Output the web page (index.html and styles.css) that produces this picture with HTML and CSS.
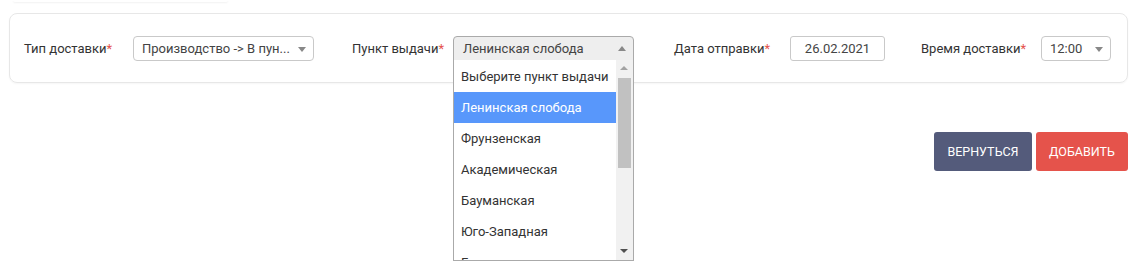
FILE: index.html
```html
<!DOCTYPE html>
<html lang="ru">
<head>
    <meta charset="UTF-8">
    <title>Доставка</title>
    <link rel="stylesheet" href="styles.css">
</head>
<body>
    <div class="page">
        <!-- Tab above the card, mostly scrolled out -->
        <div class="tab-edge"></div>

        <div class="card">
            <div class="field field-type">
                <label class="label">Тип доставки<span class="req">*</span></label>
                <div class="select">
                    <span class="select-text">Производство -&gt; В пун...</span>
                    <span class="arrow"></span>
                </div>
            </div>

            <div class="field field-point">
                <label class="label">Пункт выдачи<span class="req">*</span></label>
                <div class="select-wrap">
                    <div class="select open">
                        <span class="select-text">Ленинская слобода</span>
                        <span class="arrow up"></span>
                    </div>

                    <!-- Open dropdown -->
                    <div class="dropdown">
                        <ul class="options">
                            <li>Выберите пункт выдачи</li>
                            <li class="active">Ленинская слобода</li>
                            <li>Фрунзенская</li>
                            <li>Академическая</li>
                            <li>Бауманская</li>
                            <li>Юго-Западная</li>
                            <li>Гагаринская</li>
                        </ul>
                        <div class="scrollbar">
                            <span class="sb-btn sb-up"></span>
                            <div class="sb-track">
                                <div class="sb-thumb"></div>
                            </div>
                            <span class="sb-btn sb-down"></span>
                        </div>
                    </div>
                </div>
            </div>

            <div class="field field-date">
                <label class="label">Дата отправки<span class="req">*</span></label>
                <div class="input">26.02.2021</div>
            </div>

            <div class="field field-time">
                <label class="label">Время доставки<span class="req">*</span></label>
                <div class="select">
                    <span class="select-text">12:00</span>
                    <span class="arrow"></span>
                </div>
            </div>
        </div>

        <div class="actions">
            <button class="btn btn-back">Вернуться</button>
            <button class="btn btn-add">Добавить</button>
        </div>
    </div>
</body>
</html>
```

FILE: styles.css
```css
body {
    margin: 0;
    padding: 0;
    background-color: #fff;
    font-family: Roboto, "Liberation Sans", Arial, sans-serif;
    font-size: 13px;
    color: #333;
}

.page {
    min-height: 272px;
    padding: 0 7px 0 9px;
}

.tab-edge {
    width: 215px;
    height: 2px;
    margin-left: 4px;
    border-radius: 0 0 8px 8px;
    box-shadow: 0 1px 2px rgba(0, 0, 0, 0.06);
}

.card {
    margin-top: 11px;
    height: 68px;
    padding: 0 16px 0 14px;
    border: 1px solid #e7e7e7;
    border-radius: 8px;
    box-shadow: 0 1px 2px rgba(0, 0, 0, 0.04);
    display: flex;
    align-items: center;
}

.field {
    display: flex;
    align-items: center;
}

.label {
    flex-shrink: 0;
    color: #333;
}

.req {
    color: #e5534b;
}

.field-type .label { width: 109px; }
.field-point .label { width: 101px; }
.field-date .label { width: 116px; }
.field-time .label { width: 120px; }

.field-point { margin-left: 38px; }
.field-date { margin-left: 40px; }
.field-time { margin-left: 36px; }

/* Select boxes */
.select {
    position: relative;
    box-sizing: border-box;
    height: 25px;
    border: 1px solid #c9c9c9;
    border-radius: 4px;
    background-color: #fff;
    display: flex;
    align-items: center;
    padding: 0 22px 0 8px;
    color: #444;
    white-space: nowrap;
}

.field-type .select { width: 181px; }
.field-point .select { width: 181px; }
.field-time .select { width: 70px; }

.select.open {
    background-color: #eee;
    border-color: #aaa;
    border-bottom-left-radius: 0;
    border-bottom-right-radius: 0;
    padding-left: 9px;
}

.arrow {
    position: absolute;
    right: 7px;
    top: 10px;
    width: 0;
    height: 0;
    border-left: 4px solid transparent;
    border-right: 4px solid transparent;
    border-top: 5px solid #888;
}

.arrow.up {
    top: 9px;
    border-top: none;
    border-bottom: 5px solid #888;
}

.select-wrap {
    position: relative;
}

/* Dropdown list */
.dropdown {
    position: absolute;
    top: 24px;
    left: 0;
    box-sizing: border-box;
    width: 181px;
    height: 201px;
    border: 1px solid #aaa;
    border-top: none;
    background-color: #fff;
    display: flex;
    overflow: hidden;
    z-index: 10;
}

.options {
    list-style: none;
    margin: 0;
    padding: 1px 0 0;
    flex: 1;
    overflow: hidden;
}

.options li {
    height: 31px;
    line-height: 31px;
    padding-left: 7px;
    color: #333;
    white-space: nowrap;
}

.options li.active {
    background-color: #5897fb;
    color: #fff;
}

.scrollbar {
    width: 17px;
    background-color: #f1f1f1;
    display: flex;
    flex-direction: column;
}

.sb-btn {
    height: 16px;
    position: relative;
}

.sb-btn::after {
    content: "";
    position: absolute;
    left: 4px;
    width: 0;
    height: 0;
    border-left: 4px solid transparent;
    border-right: 4px solid transparent;
}

.sb-up::after {
    top: 6px;
    border-bottom: 4px solid #a3a3a3;
}

.sb-down::after {
    top: 5px;
    border-top: 4px solid #505050;
}

.sb-track {
    flex: 1;
    padding: 2px 2px 0;
}

.sb-thumb {
    height: 90px;
    background-color: #c1c1c1;
}

/* Date input */
.input {
    box-sizing: border-box;
    width: 95px;
    height: 25px;
    line-height: 23px;
    border: 1px solid #c9c9c9;
    border-radius: 3px;
    text-align: center;
    color: #444;
}

/* Buttons */
.actions {
    margin-top: 49px;
    display: flex;
    justify-content: flex-end;
    gap: 4px;
}

.btn {
    height: 39px;
    border: none;
    border-radius: 3px;
    color: #fff;
    font-family: Roboto, "Liberation Sans", Arial, sans-serif;
    font-size: 12.5px;
    text-transform: uppercase;
    cursor: pointer;
}

.btn-back {
    width: 98px;
    background-color: #545b7b;
}

.btn-add {
    width: 92px;
    background-color: #e5534b;
}
```
